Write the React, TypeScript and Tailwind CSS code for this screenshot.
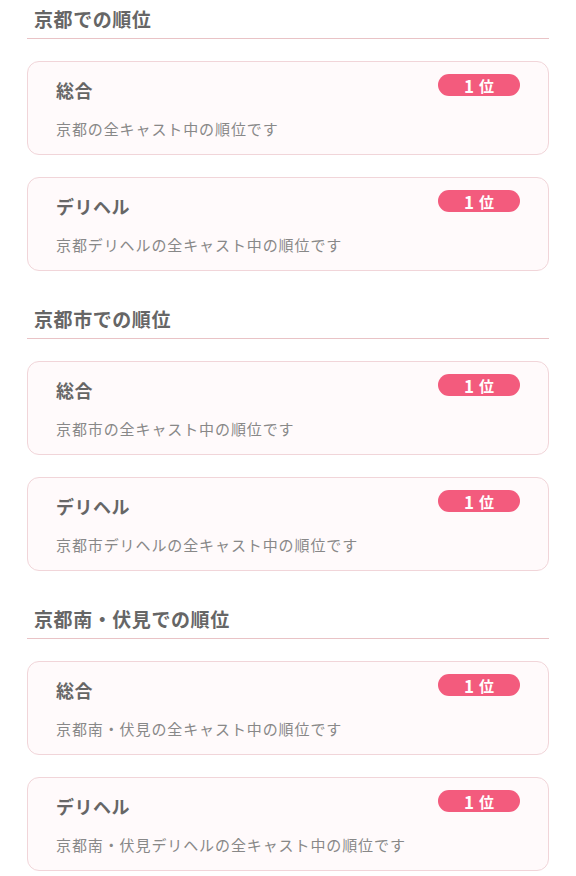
import React from "react";

type Rank = { title: string; desc: string; rank: number };
type Area = { name: string; items: Rank[] };

const areas: Area[] = [
  {
    name: "京都での順位",
    items: [
      { title: "総合", desc: "京都の全キャスト中の順位です", rank: 1 },
      { title: "デリヘル", desc: "京都デリヘルの全キャスト中の順位です", rank: 1 },
    ],
  },
  {
    name: "京都市での順位",
    items: [
      { title: "総合", desc: "京都市の全キャスト中の順位です", rank: 1 },
      { title: "デリヘル", desc: "京都市デリヘルの全キャスト中の順位です", rank: 1 },
    ],
  },
  {
    name: "京都南・伏見での順位",
    items: [
      { title: "総合", desc: "京都南・伏見の全キャスト中の順位です", rank: 1 },
      { title: "デリヘル", desc: "京都南・伏見デリヘルの全キャスト中の順位です", rank: 1 },
    ],
  },
];

function RankCard({ item }: { item: Rank }) {
  return (
    <div className="rounded-[12px] border border-[#f1d5d9] bg-[#fffafb] px-[28px] pt-[12px] pb-[14px]">
      <div className="flex items-start justify-between">
        <h3 className="mt-[4px] text-[18px] leading-[24px] font-bold tracking-[0.03em] text-[#666]">
          {item.title}
        </h3>
        <span className="flex h-[22px] w-[82px] items-center justify-center rounded-full bg-[#f35b7d] text-white">
          <span className="text-[17px] leading-none font-bold">{item.rank}</span>
          <span className="ml-[5px] text-[15px] leading-none font-bold">位</span>
        </span>
      </div>
      <p className="mt-[16px] text-[15px] leading-[22px] tracking-[0.06em] text-[#888]">
        {item.desc}
      </p>
    </div>
  );
}

export default function App() {
  return (
    <div
      className="min-h-[876px] bg-white px-[27px]"
      style={{ fontFamily: '"Noto Sans CJK JP", "Noto Sans", sans-serif' }}
    >
      {areas.map((area) => (
        <section key={area.name} className="pb-[29px]">
          <h2 className="border-b border-[#e9c3c6] pt-[5px] pb-[5px] pl-[7px] text-[19px] leading-[28px] font-bold tracking-[0.03em] text-[#666]">
            {area.name}
          </h2>
          <div className="mt-[22px] flex flex-col gap-[22px]">
            {area.items.map((item) => (
              <RankCard key={item.title} item={item} />
            ))}
          </div>
        </section>
      ))}
    </div>
  );
}
